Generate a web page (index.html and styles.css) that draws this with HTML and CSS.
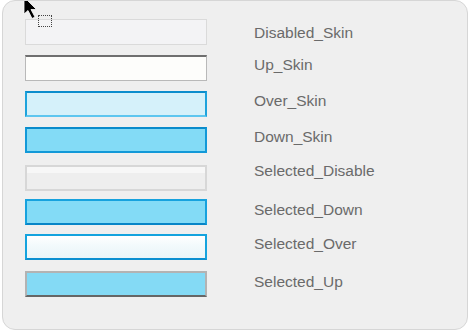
FILE: index.html
```html
<!DOCTYPE html>
<html lang="en">
<head>
    <meta charset="UTF-8">
    <title>Button Skins</title>
    <link rel="stylesheet" href="styles.css">
</head>
<body>
    <div class="panel">
        <div class="skin-list">
            <div class="skin skin-disabled"></div>
            <div class="label label-low">Disabled_Skin</div>

            <div class="skin skin-up"></div>
            <div class="label">Up_Skin</div>

            <div class="skin skin-over"></div>
            <div class="label">Over_Skin</div>

            <div class="skin skin-down"></div>
            <div class="label">Down_Skin</div>

            <div class="skin skin-sel-disable row-push"></div>
            <div class="label label-high row-push">Selected_Disable</div>

            <div class="skin skin-sel-down"></div>
            <div class="label label-mid">Selected_Down</div>

            <div class="skin skin-sel-over row-pull"></div>
            <div class="label row-pull">Selected_Over</div>

            <div class="skin skin-sel-up"></div>
            <div class="label label-mid">Selected_Up</div>
        </div>

        <!-- mouse pointer + focus rect sitting over the panel -->
        <div class="focus-rect"></div>
        <svg class="cursor" width="16" height="24" viewBox="0 0 16 24">
            <path d="M1 0 L1 17 L5 13.5 L9 21.5 L12 20 L8 12.5 L13.5 12.5 Z" fill="#000" stroke="#fff" stroke-width="0.8"/>
        </svg>
    </div>
</body>
</html>
```

FILE: styles.css
```css
body {
    margin: 0;
    background: #fff;
    font-family: "Liberation Sans", Arial, sans-serif;
}

.panel {
    position: relative;
    box-sizing: border-box;
    width: 466px;
    height: 330px;
    margin: 0 0 0 2px;
    padding: 18px 0 0 22px;
    background: #efefef;
    border: 1px solid #d6d6d6;
    border-radius: 13px;
    overflow: hidden;
}

.skin-list {
    display: grid;
    grid-template-columns: 182px auto;
    column-gap: 47px;
    row-gap: 10px;
}

.skin {
    box-sizing: border-box;
    height: 26px;
}

.label {
    align-self: start;
    font-size: 15.5px;
    line-height: 18px;
    color: #6a6a6a;
    margin-top: 1px;
}

.label-low { margin-top: 5px; }
.label-mid { margin-top: 2px; }
.label-high { margin-top: -3px; }

/* rows in the shot are not quite evenly spaced */
.row-push { position: relative; top: 2px; }
.row-pull { position: relative; top: -1px; }

.skin-disabled {
    background: #f3f3f5;
    border: 1px solid #dadada;
}

.skin-up {
    background: #fdfdfb;
    border: 1px solid #b9b9b9;
    border-top: 2px solid #6f6f6f;
}

.skin-over {
    background: #d5f1fa;
    border: 2px solid #1ea3dc;
    border-top-color: #0c8dcc;
    border-bottom-color: #5ec6ef;
}

.skin-down {
    background: #83dbf6;
    border: 2px solid #1299d8;
    border-top-color: #0a8bcb;
}

.skin-sel-disable {
    background: linear-gradient(#f7f7f7 0, #f7f7f7 6px, #eeeeee 6px);
    border: 2px solid #d7d7d7;
}

.skin-sel-down {
    background: #83dbf6;
    border: 2px solid #16a2de;
    border-bottom-color: #0785c7;
}

.skin-sel-over {
    background: linear-gradient(#ffffff 0, #f3fafc 40%, #e9f5f8 100%);
    border: 2px solid #14a3de;
    border-bottom-color: #0b8fd0;
}

.skin-sel-up {
    background: #84daf5;
    border: 2px solid #b3b3b3;
    border-bottom-color: #666;
}

.focus-rect {
    position: absolute;
    left: 35px;
    top: 14px;
    width: 12px;
    height: 10px;
    border: 1px dotted #444;
}

.cursor {
    position: absolute;
    left: 20px;
    top: -4px;
}
```
